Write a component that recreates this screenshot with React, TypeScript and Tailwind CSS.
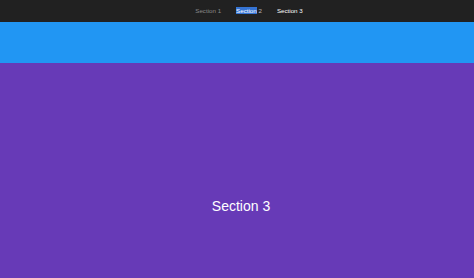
export default function App() {
  return (
    <div className="flex flex-col w-[474px] h-[278px] overflow-hidden" style={{ fontFamily: '"Liberation Sans", Arial, sans-serif' }}>
      <nav className="h-[22px] bg-[#212121] flex items-center justify-center pl-[24px]">
        <div className="flex items-center gap-[15px] text-[6.2px] leading-[8px] pb-[1px]">
          <span className="text-[#8a8a8a]">Section 1</span>
          <span className="text-[#b8b8b8]">
            <span className="bg-[#3574d4] text-white">Section</span> 2
          </span>
          <span className="text-white">Section 3</span>
        </div>
      </nav>
      <div className="h-[41px] bg-[#2196f3]" />
      <div className="flex-1 bg-[#673ab7] flex items-end justify-center pb-[64px] pl-[8px]">
        <span className="text-white text-[14px] leading-[16px]">Section 3</span>
      </div>
    </div>
  );
}
